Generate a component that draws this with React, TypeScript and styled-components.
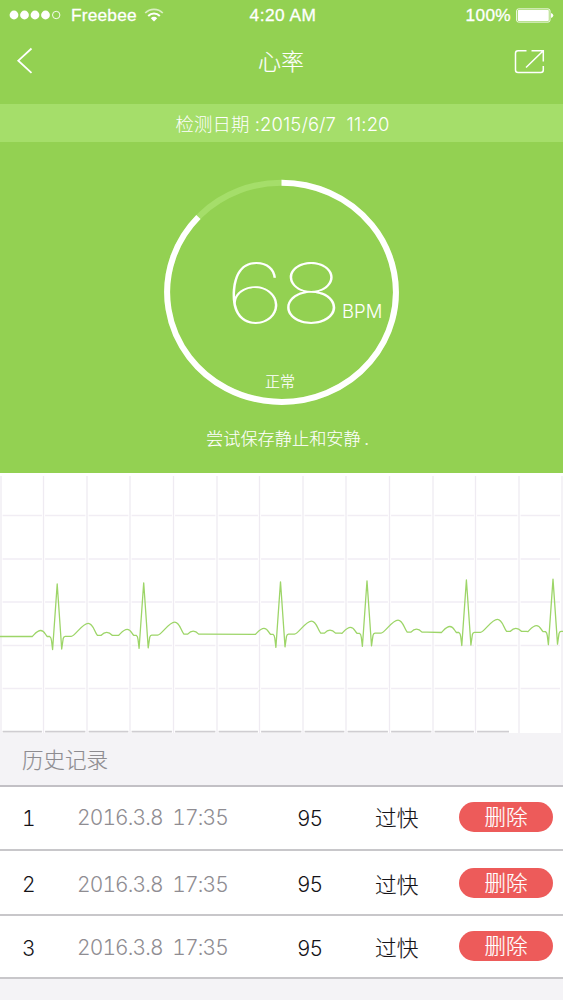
import React from 'react';
import styled, { createGlobalStyle } from 'styled-components';

const GlobalStyle = createGlobalStyle`
  * { box-sizing: border-box; }
  body { margin: 0; background: #f4f3f6; }
`;

const latin = '"Liberation Sans", "Noto Sans CJK SC", sans-serif';
const light = 'Inter, "Noto Sans CJK SC", sans-serif';
const cjk = '"Noto Sans CJK SC", sans-serif';

const Screen = styled.main`
  display: flex;
  flex-direction: column;
  width: 563px;
  height: 1000px;
  overflow: hidden;
  background: #f4f3f6;
  font-family: ${latin};
`;

const Hero = styled.section`
  display: flex;
  flex-direction: column;
  height: 473px;
  flex: none;
  background: #93d152;
  color: #fff;
`;

const StatusBar = styled.div`
  display: grid;
  grid-template-columns: 1fr auto 1fr;
  align-items: center;
  height: 30px;
  padding: 0 9px;
  font-size: 17.3px;
  line-height: 30px;
  -webkit-text-stroke: 0.3px #fff;
`;

const StatusGroup = styled.div<{ $end?: boolean }>`
  display: flex;
  align-items: center;
  justify-content: ${p => (p.$end ? 'flex-end' : 'flex-start')};
`;

const Carrier = styled.span`
  margin: 0 7px 0 9px;
  letter-spacing: 0.2px;
`;

const Clock = styled.span`
  padding-left: 3px;
  letter-spacing: 0.5px;
`;

const Percent = styled.span`
  margin-right: 5px;
  letter-spacing: 0.3px;
`;

const NavBar = styled.nav`
  display: flex;
  align-items: flex-start;
  justify-content: space-between;
  height: 74px;
  padding: 17px 17px 0 16px;
`;

const IconButton = styled.button`
  display: flex;
  width: 32px;
  height: 30px;
  padding: 0;
  border: 0;
  background: none;
  color: #fff;
`;

const Title = styled.h1`
  margin: 0;
  font: 300 23px/26px ${cjk};
  -webkit-text-stroke: 0.15px currentColor;
`;

const DateBand = styled.div`
  display: flex;
  justify-content: center;
  height: 38px;
  padding-left: 2px;
  background: #a5de6a;
  font: 300 18.4px/40px ${light};
  letter-spacing: 0.12px;
  white-space: pre;
  color: #fff;
`;

const Gauge = styled.div`
  display: grid;
  width: 235px;
  height: 226px;
  margin: 37px 0 0 164px;
  > * { grid-area: 1 / 1; }
`;

const Reading = styled.div`
  display: flex;
  align-items: flex-start;
  padding: 64px 0 0 61px;
`;

const Bpm = styled.span`
  width: 117px;
  font: 100 83px/100px Inter, sans-serif;
  letter-spacing: -4.2px;
  white-space: nowrap;
  transform: scaleX(1.28);
  transform-origin: left;
`;

const Unit = styled.span`
  font: 300 18.5px/22px ${light};
  margin-top: 57px;
`;

const Verdict = styled.div`
  align-self: end;
  padding: 0 3px 13px 0;
  text-align: center;
  font: 300 15px/22px ${cjk};
  -webkit-text-stroke: 0.15px currentColor;
`;

const Hint = styled.p`
  margin: 20px 0 0 206px;
  font: 300 17.2px/26px ${cjk};
  white-space: pre;
  -webkit-text-stroke: 0.1px currentColor;
`;

const Chart = styled.section`
  height: 260px;
  flex: none;
  background: #fff;
  svg { display: block; }
`;

const SectionTitle = styled.h2`
  height: 54px;
  flex: none;
  margin: 0;
  padding-left: 22px;
  border-bottom: 2px solid #c2c0c5;
  font: 300 21.5px/51px ${cjk};
  color: #8e8c90;
  -webkit-text-stroke: 0.15px currentColor;
`;

const Row = styled.div<{ $height: number }>`
  display: grid;
  grid-template-columns: 78px 219px 78px 84px 94px;
  align-items: center;
  flex: none;
  height: ${p => p.$height}px;
  border-bottom: 2px solid #c8c7ca;
  background: #fff;
  font: 300 21px/26px ${light};
  font-variant-numeric: tabular-nums;
  color: #151318;
`;

const Index = styled.span<{ $drop: number }>`
  padding: ${p => p.$drop}px 0 0 22px;
`;

const Stamp = styled.time<{ $drop: number }>`
  margin-left: -1px;
  padding-top: ${p => p.$drop}px;
  letter-spacing: -0.88px;
  white-space: pre;
  color: #8f8d92;
`;

const Value = styled.span<{ $drop: number }>`
  padding-top: ${p => p.$drop}px;
  letter-spacing: -1.2px;
`;

const State = styled.span<{ $drop: number }>`
  padding-top: ${p => p.$drop}px;
  font: 300 21.7px/26px ${cjk};
  margin-top: -3px;
  -webkit-text-stroke: 0.15px currentColor;
`;

const DeleteButton = styled.button<{ $lift: number }>`
  height: 30px;
  margin-bottom: ${p => p.$lift}px;
  padding: 0 0 2px;
  border: 0;
  border-radius: 15px;
  background: #ed5b5a;
  color: #fff;
  font: 300 21.5px/26px ${cjk};
  -webkit-text-stroke: 0.2px currentColor;
`;

const SignalDots = () => (
  <svg width="53" height="12" viewBox="0 0 53 12">
    {[5, 15.5, 26, 36.5].map(x => <circle key={x} cx={x} cy="6" r="4.4" fill="#fff" />)}
    <circle cx="47.2" cy="6" r="3.7" fill="none" stroke="#fff" strokeWidth="0.9" />
  </svg>
);

const Wifi = () => (
  <svg width="20" height="14" viewBox="0 0 20 14" fill="none" stroke="#fff">
    <path d="M1.2 5 A12.4 12.4 0 0 1 18.8 5" strokeWidth="1.7" opacity="0.65" />
    <path d="M4.2 8 A8.2 8.2 0 0 1 15.8 8" strokeWidth="2" />
    <path d="M10 13.4 L6.8 10.2 A4.5 4.5 0 0 1 13.2 10.2 Z" fill="#fff" stroke="none" />
  </svg>
);

const Battery = () => (
  <svg width="38" height="15" viewBox="0 0 38 15">
    <rect x="0.6" y="0.9" width="33.4" height="13.2" rx="2" fill="none" stroke="#fff" strokeWidth="0.9" />
    <rect x="1.8" y="2" width="31" height="11" rx="0.8" fill="#fff" />
    <path d="M35 5 Q37.3 5.7 37.3 7.5 Q37.3 9.3 35 10 Z" fill="#fff" />
  </svg>
);

const Ring = () => (
  <svg width="235" height="226" viewBox="0 0 235 226" fill="none" strokeWidth="6">
    <ellipse cx="117.5" cy="113.3" rx="114.4" ry="109.6" stroke="#a5de6a" />
    <path d="M117.5 3.7 A114.4 109.6 0 1 1 34.4 38" stroke="#fff" />
  </svg>
);

const beats: [number, number][] = [
  [57.2, 163.5], [143.7, 162.3], [280.5, 161.3], [367, 160.3], [466.4, 159.5], [553, 158.6],
];

// One heartbeat: P wave, QRS spike, T wave and a small U wave around the peak.
const beatPath = ([x, b]: [number, number]) => {
  const p = (dx: number, dy: number) => `${(x + dx).toFixed(1)} ${(b + dy).toFixed(1)}`;
  return [
    `L${p(-25, 0)}`,
    `C${p(-22, -3)} ${p(-20, -6)} ${p(-16.5, -6)}`,
    `C${p(-13, -6)} ${p(-12, -2)} ${p(-10, 0)}`,
    `L${p(-7.5, 0)} Q${p(-6, 1)} ${p(-5.7, 4)} L${p(-4.6, 13)}`,
    `L${p(0, -52.5)} L${p(4.5, 12.5)}`,
    `L${p(6, 2)} Q${p(6.5, 0)} ${p(8, -0.2)} L${p(14, -0.2)}`,
    `C${p(18, -0.5)} ${p(25, -13.2)} ${p(31, -13.2)}`,
    `C${p(36, -13.2)} ${p(37, -5)} ${p(40.2, -1.2)} L${p(44, -1.2)}`,
    `Q${p(49.5, -7)} ${p(55, -1.2)} L${p(60, -1.2)}`,
  ].join(' ');
};

const columns = [1, 43.5, 87, 130, 173.5, 217, 259.5, 303, 346, 389.5, 433, 475.5, 519, 562];
const lines = [42.5, 86, 129, 172.5, 215.5];

const Ecg = () => (
  <svg width="563" height="260" viewBox="0 0 563 260" fill="none">
    {lines.map(y => <path key={y} d={`M2 ${y}H560`} stroke="#f1edf4" strokeWidth="1.3" />)}
    <path d="M2 258.7H509" stroke="#cfcdd1" strokeWidth="1.8" />
    {columns.map(x => <path key={x} d={`M${x} 3V260`} stroke="#fff" strokeWidth="3.2" />)}
    {columns.map(x => <path key={x} d={`M${x} 3V260`} stroke="#efebf2" strokeWidth="1.3" />)}
    <path d={`M0 163.5 ${beats.map(beatPath).join(' ')}`} stroke="#9dd568" strokeWidth="1.3" strokeLinejoin="round" />
  </svg>
);

const records = [
  { id: 1, height: 64, drop: 1, stampDrop: 0, lift: 2 },
  { id: 2, height: 65, drop: 5, stampDrop: 4, lift: 0 },
  { id: 3, height: 63, drop: 4, stampDrop: 2, lift: 1 },
];

export default function App() {
  return (
    <Screen>
      <GlobalStyle />
      <Hero>
        <StatusBar>
          <StatusGroup><SignalDots /><Carrier>Freebee</Carrier><Wifi /></StatusGroup>
          <Clock>4:20 AM</Clock>
          <StatusGroup $end><Percent>100%</Percent><Battery /></StatusGroup>
        </StatusBar>
        <NavBar>
          <IconButton aria-label="返回">
            <svg width="32" height="30" viewBox="0 0 32 30" fill="none" stroke="#fff" strokeWidth="1.8">
              <path d="M15.5 1.5 L2.3 13.7 L15.5 25.8" />
            </svg>
          </IconButton>
          <Title>心率</Title>
          <IconButton aria-label="分享">
            <svg width="32" height="30" viewBox="0 0 32 30" fill="none" stroke="#fff" strokeWidth="1.5">
              <path d="M12.5 3.7 H4 Q1.5 3.7 1.5 6.2 V23 Q1.5 25.5 4 25.5 H26.8 Q29.3 25.5 29.3 23 V19" />
              <path d="M17.5 3.7 H29.3 V14.5 M29 4 L12 20.5" />
            </svg>
          </IconButton>
        </NavBar>
        <DateBand>检测日期 :2015/6/7  11:20</DateBand>
        <Gauge>
          <Ring />
          <Reading><Bpm>68</Bpm><Unit>BPM</Unit></Reading>
          <Verdict>正常</Verdict>
        </Gauge>
        <Hint>尝试保存静止和安静 .</Hint>
      </Hero>
      <Chart><Ecg /></Chart>
      <SectionTitle>历史记录</SectionTitle>
      {records.map(r => (
        <Row key={r.id} $height={r.height}>
          <Index $drop={r.drop}>{r.id}</Index>
          <Stamp $drop={r.stampDrop}>2016.3.8  17:35</Stamp>
          <Value $drop={r.drop}>95</Value>
          <State $drop={r.drop}>过快</State>
          <DeleteButton $lift={r.lift}>删除</DeleteButton>
        </Row>
      ))}
    </Screen>
  );
}
